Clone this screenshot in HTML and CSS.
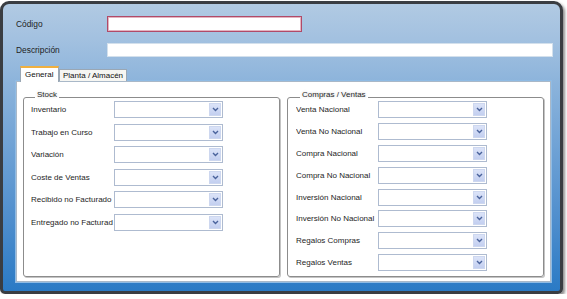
FILE: index.html
```html
<!DOCTYPE html>
<html>
<head>
<meta charset="utf-8">
<link rel="stylesheet" href="styles.css">
</head>
<body>
<div class="window">
  <div class="field-row row-codigo">
    <span class="field-label">Código</span>
    <div class="input input-codigo"></div>
  </div>
  <div class="field-row row-desc">
    <span class="field-label">Descripción</span>
    <div class="input input-desc"></div>
  </div>
  <div class="tabs">
    <div class="tab tab-active">General</div>
    <div class="tab">Planta / Almacén</div>
  </div>
  <div class="panel">
    <div class="group group-left">
      <span class="legend legend-stock">Stock</span>
      <div class="rows rows-left">
        <div class="row"><span class="lbl">Inventario</span><div class="combo"><span class="btn"><svg width="7" height="5" viewBox="0 0 7 5"><path d="M1 1 L3.5 3.5 L6 1" fill="none" stroke="#4a639c" stroke-width="1.4"/></svg></span></div></div>
        <div class="row"><span class="lbl">Trabajo en Curso</span><div class="combo"><span class="btn"><svg width="7" height="5" viewBox="0 0 7 5"><path d="M1 1 L3.5 3.5 L6 1" fill="none" stroke="#4a639c" stroke-width="1.4"/></svg></span></div></div>
        <div class="row"><span class="lbl">Variación</span><div class="combo"><span class="btn"><svg width="7" height="5" viewBox="0 0 7 5"><path d="M1 1 L3.5 3.5 L6 1" fill="none" stroke="#4a639c" stroke-width="1.4"/></svg></span></div></div>
        <div class="row"><span class="lbl">Coste de Ventas</span><div class="combo"><span class="btn"><svg width="7" height="5" viewBox="0 0 7 5"><path d="M1 1 L3.5 3.5 L6 1" fill="none" stroke="#4a639c" stroke-width="1.4"/></svg></span></div></div>
        <div class="row"><span class="lbl">Recibido no Facturado</span><div class="combo"><span class="btn"><svg width="7" height="5" viewBox="0 0 7 5"><path d="M1 1 L3.5 3.5 L6 1" fill="none" stroke="#4a639c" stroke-width="1.4"/></svg></span></div></div>
        <div class="row"><span class="lbl">Entregado no Facturad</span><div class="combo"><span class="btn"><svg width="7" height="5" viewBox="0 0 7 5"><path d="M1 1 L3.5 3.5 L6 1" fill="none" stroke="#4a639c" stroke-width="1.4"/></svg></span></div></div>
      </div>
    </div>
    <div class="group group-right">
      <span class="legend legend-cv">Compras / Ventas</span>
      <div class="rows rows-right">
        <div class="row"><span class="lbl">Venta Nacional</span><div class="combo"><span class="btn"><svg width="7" height="5" viewBox="0 0 7 5"><path d="M1 1 L3.5 3.5 L6 1" fill="none" stroke="#4a639c" stroke-width="1.4"/></svg></span></div></div>
        <div class="row"><span class="lbl">Venta No Nacional</span><div class="combo"><span class="btn"><svg width="7" height="5" viewBox="0 0 7 5"><path d="M1 1 L3.5 3.5 L6 1" fill="none" stroke="#4a639c" stroke-width="1.4"/></svg></span></div></div>
        <div class="row"><span class="lbl">Compra Nacional</span><div class="combo"><span class="btn"><svg width="7" height="5" viewBox="0 0 7 5"><path d="M1 1 L3.5 3.5 L6 1" fill="none" stroke="#4a639c" stroke-width="1.4"/></svg></span></div></div>
        <div class="row"><span class="lbl">Compra No Nacional</span><div class="combo"><span class="btn"><svg width="7" height="5" viewBox="0 0 7 5"><path d="M1 1 L3.5 3.5 L6 1" fill="none" stroke="#4a639c" stroke-width="1.4"/></svg></span></div></div>
        <div class="row"><span class="lbl">Inversión Nacional</span><div class="combo"><span class="btn"><svg width="7" height="5" viewBox="0 0 7 5"><path d="M1 1 L3.5 3.5 L6 1" fill="none" stroke="#4a639c" stroke-width="1.4"/></svg></span></div></div>
        <div class="row"><span class="lbl">Inversión No Nacional</span><div class="combo"><span class="btn"><svg width="7" height="5" viewBox="0 0 7 5"><path d="M1 1 L3.5 3.5 L6 1" fill="none" stroke="#4a639c" stroke-width="1.4"/></svg></span></div></div>
        <div class="row"><span class="lbl">Regalos Compras</span><div class="combo"><span class="btn"><svg width="7" height="5" viewBox="0 0 7 5"><path d="M1 1 L3.5 3.5 L6 1" fill="none" stroke="#4a639c" stroke-width="1.4"/></svg></span></div></div>
        <div class="row"><span class="lbl">Regalos Ventas</span><div class="combo"><span class="btn"><svg width="7" height="5" viewBox="0 0 7 5"><path d="M1 1 L3.5 3.5 L6 1" fill="none" stroke="#4a639c" stroke-width="1.4"/></svg></span></div></div>
      </div>
    </div>
  </div>
</div>
</body>
</html>
```
FILE: styles.css
```css
html, body {
  margin: 0;
  padding: 0;
  background: #ffffff;
}
body {
  font-family: "Liberation Sans", Arial, sans-serif;
  font-size: 8px;
  color: #1e1e1e;
}
.window {
  box-sizing: border-box;
  width: 563px;
  height: 293px;
  margin-top: 1px;
  border: 3px solid #3a3d42;
  border-radius: 9px 9px 5px 5px;
  background: linear-gradient(#b1cae3 0%, #a3c1e0 12%, #8bb3db 28%, #6fa2d5 50%, #4f8ecd 75%, #2a7ac5 100%);
  box-shadow: 2px 2px 3px rgba(0,0,0,0.45);
  padding: 12px 0 8px 13px;
  display: flex;
  flex-direction: column;
}
.field-row {
  display: flex;
  align-items: center;
}
.field-label {
  width: 91px;
  flex: none;
  font-size: 8.4px;
}
.row-codigo {
  height: 16px;
}
.row-desc {
  height: 14px;
  margin-top: 11px;
}
.input {
  background: #ffffff;
  box-sizing: border-box;
}
.input-codigo {
  width: 195px;
  height: 16px;
  border: 1px solid #b04a68;
  box-shadow: inset 0 0 0 1px #e3b3c0;
}
.input-desc {
  width: 446px;
  height: 14px;
  border: 1px solid #d3e0ec;
}
.tabs {
  display: flex;
  align-items: flex-end;
  margin-top: 9px;
  padding-left: 4px;
  height: 15px;
  position: relative;
  z-index: 1;
}
.tab {
  box-sizing: border-box;
  height: 12px;
  padding: 0 3px;
  line-height: 11px;
  background: #f6f6f2;
  border: 1px solid #9aa7b4;
  border-bottom: none;
  color: #111;
}
.tab-active {
  width: 39px;
  height: 16px;
  padding-left: 4px;
  line-height: 13px;
  background: #ffffff;
  border-top: 2px solid #f0b040;
  border-color: #f0b040 #9aa7b4 #ffffff #9aa7b4;
  margin-bottom: -1px;
}
.panel {
  box-sizing: border-box;
  width: 535px;
  height: 201px;
  background: #ffffff;
  border: 1px solid #a9b8c8;
  box-shadow: 0 0 0 1px #8fbbe4;
  display: flex;
  gap: 7px;
  padding: 15px 5px 5px 6px;
}
.group {
  position: relative;
  box-sizing: border-box;
  width: 257px;
  height: 180px;
  border: 1px solid #8c8c8c;
  border-radius: 3px;
  box-shadow: 1px 1px 0 #c4c4c4;
  padding: 3px 0 0 7px;
}
.legend {
  position: absolute;
  top: -8px;
  line-height: 10px;
  padding: 0 2px;
  background: #ffffff;
  color: #2a2a2a;
  text-shadow: 0 0 3px #c2c2c2;
}
.legend-stock {
  left: 11px;
}
.legend-cv {
  left: 12px;
}
.rows {
  display: flex;
  flex-direction: column;
}
.rows-left {
  gap: 5.6px;
}
.rows-right {
  gap: 4.9px;
  padding-left: 1px;
}
.row {
  display: flex;
  align-items: center;
  height: 17px;
}
.lbl {
  width: 83px;
  flex: none;
  white-space: nowrap;
  overflow: hidden;
}
.rows-right .lbl {
  width: 82px;
}
.combo {
  box-sizing: border-box;
  width: 109px;
  height: 17px;
  border: 1px solid #aebbd0;
  background: #ffffff;
  display: flex;
  justify-content: flex-end;
  padding: 1px;
}
.btn {
  box-sizing: border-box;
  width: 12px;
  height: 100%;
  background: linear-gradient(#dbe3f8, #c3cff0);
  border: 1px solid #cdd7ef;
  display: flex;
  align-items: center;
  justify-content: center;
}
.btn svg {
  display: block;
}
```
